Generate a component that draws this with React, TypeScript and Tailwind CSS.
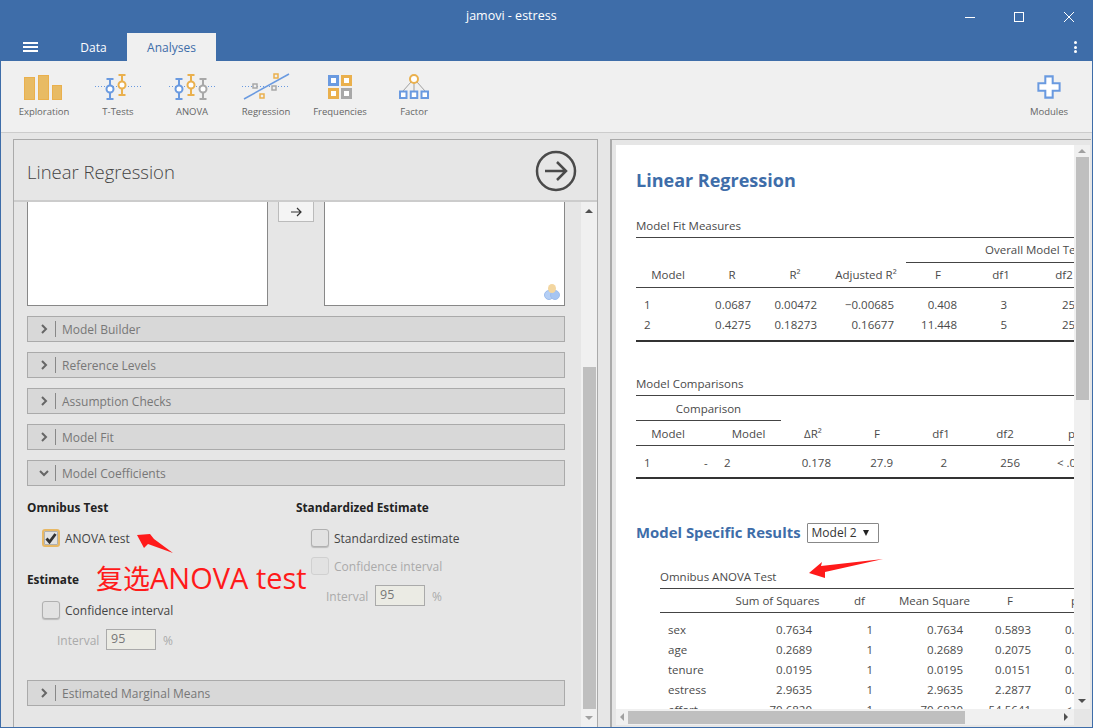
import React from "react";

const FONT = "font-['Open_Sans','Noto_Sans',sans-serif]";

function Exploration() {
  return (
    <svg width="40" height="28" viewBox="0 0 40 28" className="block">
      <rect x="0.5" y="5.5" width="10" height="22" fill="#e8bb64" stroke="#eab04d" />
      <rect x="14.5" y="3.5" width="10" height="24" fill="#e8bb64" stroke="#eab04d" />
      <rect x="28.5" y="13.5" width="9" height="14" fill="#e8bb64" stroke="#eab04d" />
    </svg>
  );
}

function Whisker({ x, top, bottom, cy, color }: { x: number; top: number; bottom: number; cy: number; color: string }) {
  return (
    <g stroke={color} strokeWidth="2" fill="none">
      <path d={`M${x - 3.5} ${top}H${x + 3.5}M${x - 3.5} ${bottom}H${x + 3.5}M${x} ${top}V${cy - 3.5}M${x} ${cy + 3.5}V${bottom}`} />
      <circle cx={x} cy={cy} r="3.5" fill="#fff" />
    </g>
  );
}

function TTests() {
  return (
    <svg width="48" height="28" viewBox="0 0 48 28" className="block">
      <path d="M1 14.5H47" stroke="#6a9ae0" strokeWidth="1" strokeDasharray="1 2" />
      <Whisker x={16} top={7} bottom={27} cy={17} color="#6a9ae0" />
      <Whisker x={28} top={3} bottom={23} cy={13} color="#eab04d" />
    </svg>
  );
}

function Anova() {
  return (
    <svg width="48" height="28" viewBox="0 0 48 28" className="block">
      <path d="M1 14.5H47" stroke="#6a9ae0" strokeWidth="1" strokeDasharray="1 2" />
      <Whisker x={11} top={7} bottom={27} cy={17} color="#6a9ae0" />
      <Whisker x={23} top={3} bottom={23} cy={13} color="#eab04d" />
      <Whisker x={35} top={7} bottom={27} cy={17} color="#a8a8a8" />
    </svg>
  );
}

function Regression() {
  return (
    <svg width="50" height="28" viewBox="0 0 50 28" className="block">
      <path d="M1 14.5H49" stroke="#6a9ae0" strokeWidth="1" strokeDasharray="1 2" />
      <path d="M3 27L48 2" stroke="#6a9ae0" strokeWidth="1.5" />
      <rect x="12" y="12" width="4" height="4" fill="#f0f0f0" stroke="#a8a8a8" strokeWidth="1.5" />
      <rect x="31" y="14" width="4" height="4" fill="#f0f0f0" stroke="#a8a8a8" strokeWidth="1.5" />
      <rect x="33" y="2" width="4" height="4" fill="#f0f0f0" stroke="#eab04d" strokeWidth="1.5" />
      <rect x="19" y="22" width="4" height="4" fill="#f0f0f0" stroke="#eab04d" strokeWidth="1.5" />
    </svg>
  );
}

function Frequencies() {
  const box = (x: number, y: number, c: string) => (
    <g key={`${x}-${y}`}>
      <rect x={x} y={y} width="11" height="11" fill={c} />
      <rect x={x + 3} y={y + 3} width="5" height="5" fill="#fff" />
    </g>
  );
  return (
    <svg width="24" height="24" viewBox="0 0 24 24" className="block mb-px">
      {box(0, 0, "#6a9ae0")}
      {box(13, 0, "#eab04d")}
      {box(0, 13, "#eab04d")}
      {box(13, 13, "#a8a8a8")}
    </svg>
  );
}

function Factor() {
  return (
    <svg width="32" height="28" viewBox="0 0 32 28" className="block">
      <path d="M13 10L5 19M16 11V19M19 10L27 19" stroke="#a0a0a0" strokeWidth="1" />
      <circle cx="16" cy="7" r="4" fill="#fff" stroke="#eab04d" strokeWidth="2" />
      <rect x="2" y="19.5" width="6.5" height="6.5" fill="#fff" stroke="#6a9ae0" strokeWidth="2" />
      <rect x="12.75" y="19.5" width="6.5" height="6.5" fill="#fff" stroke="#6a9ae0" strokeWidth="2" />
      <rect x="23.5" y="19.5" width="6.5" height="6.5" fill="#fff" stroke="#6a9ae0" strokeWidth="2" />
    </svg>
  );
}

function Plus() {
  return (
    <svg width="24" height="24" viewBox="0 0 26 26" className="block mb-px">
      <path d="M9 1.5H17V9H24.5V17H17V24.5H9V17H1.5V9H9Z" fill="#fff" stroke="#6a9ae0" strokeWidth="2.2" />
    </svg>
  );
}

function RibbonItem({ label, children, className }: { label: string; children: React.ReactNode; className: string }) {
  return (
    <div className={`flex flex-col items-center ${className}`}>
      <div className="h-[31px] mt-[8px] flex items-end justify-center">{children}</div>
      <div className="mt-[5px] text-[9.5px] leading-[14px] text-[#666] whitespace-nowrap">{label}</div>
    </div>
  );
}

function Bar({ label, open }: { label: string; open?: boolean }) {
  return (
    <div className="h-[26px] w-[538px] shrink-0 border border-[#aaa] bg-[#d8d8d8] flex items-center">
      <div className="w-[28px] h-[16px] border-r border-[#888] flex items-center justify-center text-[#666]">
        <svg width="12" height="12" viewBox="0 0 12 12" className="block ml-[5px]">
          <path d={open ? "M2 4L6 8L10 4" : "M4 2L8 6L4 10"} fill="none" stroke="#666" strokeWidth="2" />
        </svg>
      </div>
      <span className="ml-[6px] mt-[2px] text-[12px] text-[#777]">{label}</span>
    </div>
  );
}

function Check({ checked, faded, label }: { checked?: boolean; faded?: boolean; label: string }) {
  return (
    <div className="flex items-center h-[18px]">
      <div
        className={`w-[18px] h-[18px] rounded-[3px] flex items-center justify-center bg-[#e2e2e2] ${
          checked
            ? "border-2 border-[#e8b864] shadow-[inset_0_0_0_1px_#b0b0b0]"
            : faded
              ? "border border-[#d0d0d0]"
              : "border border-[#b0b0b0] shadow-[0_1px_1px_#bbb]"
        }`}
      >
        {checked && (
          <svg width="12" height="12" viewBox="0 0 12 12" className="block">
            <path d="M1.5 6.5L4.5 10L10.5 2" fill="none" stroke="#333" strokeWidth="2.8" />
          </svg>
        )}
      </div>
      <span className={`ml-[5px] mt-px text-[12px] ${faded ? "text-[#aaa]" : "text-[#444]"}`}>{label}</span>
    </div>
  );
}

function IntervalRow({ className }: { className: string }) {
  return (
    <div className={`flex items-center h-[21px] text-[12px] text-[#aaa] ${className}`}>
      <span className="w-[49px] mt-[2px]">Interval</span>
      <div className="w-[50px] h-[21px] border border-[#aaa] bg-[#ebebe4] text-[#777] pl-[4px] text-[12.5px] leading-[17px]">95</div>
      <span className="ml-[7px] mt-[2px]">%</span>
    </div>
  );
}

function Cell({ className, children }: { className: string; children?: React.ReactNode }) {
  return <div className={`shrink-0 whitespace-nowrap ${className}`}>{children}</div>;
}

const Rule = ({ thick }: { thick?: boolean }) => (
  <div className={`w-[1000px] ${thick ? "h-[2px] bg-[#333]" : "h-px bg-[#444]"}`} />
);

const T1H = ["w-[64px] text-center", "w-[64px] text-center", "w-[62px] text-center", "w-[80px] text-center", "w-[64px] text-center", "w-[62px] text-center", "w-[64px] text-center"];
const T1B = ["w-[64px] pl-[8px]", "w-[64px] text-right pr-[13px]", "w-[62px] text-right pr-[9px]", "w-[80px] text-right pr-[12px]", "w-[64px] text-right pr-[13px]", "w-[62px] text-right pr-[25px]", "w-[64px] pl-[30px]"];
const T1R = [
  ["1", "0.0687", "0.00472", "−0.00685", "0.408", "3", "258"],
  ["2", "0.4275", "0.18273", "0.16677", "11.448", "5", "256"],
];

const T3H = ["w-[70px]", "w-[95px] text-center", "w-[69px] text-center", "w-[81px] text-center", "w-[70px] text-center", "w-[95px] pl-[26px]"];
const T3B = ["w-[70px] pl-[8px]", "w-[95px] text-right pr-[13px]", "w-[69px] text-right pr-[21px]", "w-[81px] text-right pr-[12px]", "w-[70px] text-right pr-[14px]", "w-[95px] pl-[20px]"];
const T3R = [
  ["sex", "0.7634", "1", "0.7634", "0.5893", "0.443"],
  ["age", "0.2689", "1", "0.2689", "0.2075", "0.649"],
  ["tenure", "0.0195", "1", "0.0195", "0.0151", "0.902"],
  ["estress", "2.9635", "1", "2.9635", "2.2877", "0.132"],
  ["effort", "70.6820", "1", "70.6820", "54.5641", "< .001"],
];

export default function App() {
  return (
    <div className={`relative w-[1093px] h-[728px] overflow-hidden bg-[#3e6da9] flex flex-col ${FONT}`}>
      {/* title bar */}
      <div className="h-[33px] shrink-0 flex items-center text-white">
        <span className="ml-[466px] text-[12.5px]">jamovi - estress</span>
        <div className="ml-auto mr-[19px] flex items-center gap-[39px]">
          <svg width="10" height="10" viewBox="0 0 10 10" className="block"><path d="M0 5.5H10" stroke="#fff" /></svg>
          <svg width="10" height="10" viewBox="0 0 10 10" className="block"><rect x="0.5" y="0.5" width="9" height="9" fill="none" stroke="#fff" /></svg>
          <svg width="10" height="10" viewBox="0 0 10 10" className="block ml-px"><path d="M0 0L10 10M10 0L0 10" stroke="#fff" /></svg>
        </div>
      </div>
      {/* tabs */}
      <div className="h-[28px] shrink-0 flex items-end text-[12px]">
        <div className="w-[60px] h-full flex flex-col items-center justify-center gap-[2px] pl-[1px]">
          <div className="w-[15px] h-[2px] bg-white" />
          <div className="w-[15px] h-[2px] bg-white" />
          <div className="w-[15px] h-[2px] bg-white" />
        </div>
        <div className="w-[67px] h-full flex items-center justify-center text-white pt-[2px]">Data</div>
        <div className="w-[89px] h-full bg-[#f0f0f0] text-[#3e6da9] flex items-center justify-center pt-[2px]">Analyses</div>
        <div className="ml-auto mr-[16px] h-full flex flex-col items-center justify-center gap-[1.5px]">
          <div className="w-[3px] h-[3px] rounded-full bg-white" />
          <div className="w-[3px] h-[3px] rounded-full bg-white" />
          <div className="w-[3px] h-[3px] rounded-full bg-white" />
        </div>
      </div>
      {/* ribbon */}
      <div className="mx-px h-[72px] shrink-0 bg-[#f0f0f0] border-b border-[#ccc] flex pl-[6px]">
        <RibbonItem label="Exploration" className="w-[74px]"><Exploration /></RibbonItem>
        <RibbonItem label="T-Tests" className="w-[74px]"><TTests /></RibbonItem>
        <RibbonItem label="ANOVA" className="w-[74px]"><Anova /></RibbonItem>
        <RibbonItem label="Regression" className="w-[74px]"><Regression /></RibbonItem>
        <RibbonItem label="Frequencies" className="w-[74px]"><Frequencies /></RibbonItem>
        <RibbonItem label="Factor" className="w-[74px]"><Factor /></RibbonItem>
        <RibbonItem label="Modules" className="w-[74px] ml-auto mr-[6px]"><Plus /></RibbonItem>
      </div>
      {/* main */}
      <div className="mx-px mb-px flex-1 min-h-0 bg-[#e6e6e6] flex pl-[12px]">
        {/* left panel */}
        <div className="w-[585px] mt-[6px] border border-b-0 border-[#aaa] flex flex-col min-h-0">
          <div className="h-[62px] shrink-0 border-b-2 border-[#ccc] flex items-center justify-between pl-[13px] pr-[20px]">
            <span className="text-[18.5px] font-light text-[#444] mt-[4px]">Linear Regression</span>
            <svg width="42" height="42" viewBox="0 0 42 42" className="block mt-[2px]">
              <circle cx="21" cy="21" r="19" fill="none" stroke="#4a4a4a" strokeWidth="2.5" />
              <path d="M10 21H31M22 12L31 21L22 30" fill="none" stroke="#4a4a4a" strokeWidth="2.5" />
            </svg>
          </div>
          <div className="flex-1 min-h-0 flex">
            <div className="w-[567px] pl-[13px] flex flex-col">
              <div className="flex shrink-0">
                <div className="w-[241px] h-[104px] bg-white border border-t-0 border-[#888]" />
                <div className="ml-[10px] w-[36px] h-[20px] bg-[#f4f4f4] border border-t-0 border-[#bbb] flex items-center justify-center">
                  <svg width="12" height="12" viewBox="0 0 12 12" className="block">
                    <path d="M1 6H11M7 2L11 6L7 10" fill="none" stroke="#333" strokeWidth="1.2" />
                  </svg>
                </div>
                <div className="ml-[10px] w-[241px] h-[104px] bg-white border border-t-0 border-[#888] flex items-end justify-end pr-[4px] pb-[4px]">
                  <svg width="16" height="18" viewBox="0 0 16 18" className="block">
                    <circle cx="5" cy="12" r="4.5" fill="#b5cff5" stroke="#9dbdec" />
                    <circle cx="11" cy="12" r="4.5" fill="#a6c5f2" stroke="#9dbdec" />
                    <ellipse cx="8" cy="5.5" rx="4" ry="4.5" fill="#f3d6a0" />
                  </svg>
                </div>
              </div>
              <div className="mt-[10px] flex flex-col gap-[10px] shrink-0">
                <Bar label="Model Builder" />
                <Bar label="Reference Levels" />
                <Bar label="Assumption Checks" />
                <Bar label="Model Fit" />
                <Bar label="Model Coefficients" open />
              </div>
              <div className="h-[194px] shrink-0 flex">
                <div className="w-[269px] flex flex-col">
                  <div className="mt-[12px] h-[18px] leading-[18px] text-[11.8px] font-bold text-[#222]">Omnibus Test</div>
                  <div className="mt-[13px] ml-[15px]"><Check checked label="ANOVA test" /></div>
                  <div className="mt-[23px] h-[18px] leading-[18px] text-[11.8px] font-bold text-[#222]">Estimate</div>
                  <div className="mt-[13px] ml-[15px]"><Check label="Confidence interval" /></div>
                  <IntervalRow className="mt-[10px] ml-[30px]" />
                </div>
                <div className="flex flex-col">
                  <div className="mt-[12px] h-[18px] leading-[18px] text-[11.8px] font-bold text-[#222]">Standardized Estimate</div>
                  <div className="mt-[13px] ml-[15px]"><Check label="Standardized estimate" /></div>
                  <div className="mt-[10px] ml-[15px]"><Check faded label="Confidence interval" /></div>
                  <IntervalRow className="mt-[10px] ml-[30px]" />
                </div>
              </div>
              <Bar label="Estimated Marginal Means" />
            </div>
            {/* left scrollbar */}
            <div className="w-[16px] bg-[#f0f0f0] flex flex-col items-center">
              <div className="h-[17px] flex items-center justify-center">
                <div className="w-0 h-0 border-x-[4px] border-x-transparent border-b-[4px] border-b-[#505050]" />
              </div>
              <div className="h-[148px]" />
              <div className="w-[13px] h-[342px] bg-[#bfbfbf]" />
              <div className="flex-1 flex items-center justify-center">
                <div className="w-0 h-0 border-x-[4px] border-x-transparent border-t-[4px] border-t-[#a0a0a0]" />
              </div>
            </div>
          </div>
        </div>
        {/* right panel */}
        <div className="ml-[12px] w-[481px] mt-[6px] border-l-2 border-t border-[#aaa] flex flex-col min-h-0">
          <div className="flex-1 min-h-0 flex pl-[4px] pt-[5px]">
            <div className="w-[458px] bg-white overflow-hidden pl-[20px] pt-[23px] text-[11.5px] text-[#4a4a4a]">
              <div className="h-[24px] leading-[24px] text-[18px] font-bold text-[#3e6da9]">Linear Regression</div>

              <div className="mt-[26px] h-[19px] leading-[16px]">Model Fit Measures</div>
              <Rule />
              <div className="flex h-[25px] w-[1000px]">
                <div className="w-[270px] shrink-0" />
                <div className="w-[700px] shrink-0 border-b border-[#444] pl-[79px] leading-[24px] whitespace-nowrap">Overall Model Test</div>
              </div>
              <div className="flex h-[24px] items-center">
                {["Model", "R", "R²", "Adjusted R²", "F", "df1", "df2"].map((h, i) => (
                  <Cell key={h} className={T1H[i]}>{h}</Cell>
                ))}
              </div>
              <Rule />
              <div className="pt-[7px] pb-[5px]">
                {T1R.map((r) => (
                  <div key={r[0]} className="flex h-[20px] items-center">
                    {r.map((c, i) => (
                      <Cell key={i} className={T1B[i]}>{c}</Cell>
                    ))}
                  </div>
                ))}
              </div>
              <Rule thick />

              <div className="mt-[33px] h-[20px] leading-[18px]">Model Comparisons</div>
              <Rule />
              <div className="w-[145px] h-[25px] border-b border-[#444] text-center leading-[26px]">Comparison</div>
              <div className="flex h-[24px] items-center pt-[2px]">
                <Cell className="w-[64px] text-center">Model</Cell>
                <Cell className="w-[16px]" />
                <Cell className="w-[65px] text-center">Model</Cell>
                <Cell className="w-[64px] text-center">ΔR²</Cell>
                <Cell className="w-[64px] text-center">F</Cell>
                <Cell className="w-[64px] text-center">df1</Cell>
                <Cell className="w-[64px] text-center">df2</Cell>
                <Cell className="w-[64px] pl-[31px]">p</Cell>
              </div>
              <Rule />
              <div className="pt-[7px] pb-[4px]">
                <div className="flex h-[20px] items-center">
                  <Cell className="w-[64px] pl-[8px]">1</Cell>
                  <Cell className="w-[16px] pl-[4px]">-</Cell>
                  <Cell className="w-[65px] pl-[8px]">2</Cell>
                  <Cell className="w-[64px] text-right pr-[14px]">0.178</Cell>
                  <Cell className="w-[64px] text-right pr-[16px]">27.9</Cell>
                  <Cell className="w-[64px] text-right pr-[26px]">2</Cell>
                  <Cell className="w-[64px] text-right pr-[17px]">256</Cell>
                  <Cell className="w-[64px] pl-[20px]">{"< .001"}</Cell>
                </div>
              </div>
              <Rule thick />

              <div className="mt-[42px] h-[24px] flex items-center">
                <span className="text-[14.9px] font-bold text-[#3e6da9] mb-[2px]">Model Specific Results</span>
                <div className="ml-[6px] w-[72px] h-[20px] border border-[#888] rounded-[1px] bg-white flex items-center pl-[4px] text-[12px] text-[#333]">
                  Model 2
                  <span className="ml-[6px] w-0 h-0 border-x-[3.5px] border-x-transparent border-t-[6px] border-t-[#222]" />
                </div>
              </div>

              <div className="ml-[24px] mt-[23px] h-[20px] leading-[18px]">Omnibus ANOVA Test</div>
              <div className="ml-[24px]"><Rule /></div>
              <div className="ml-[24px] flex h-[23px] items-center">
                {["", "Sum of Squares", "df", "Mean Square", "F", "p"].map((h, i) => (
                  <Cell key={i} className={T3H[i]}>{h}</Cell>
                ))}
              </div>
              <div className="ml-[24px]"><Rule /></div>
              <div className="ml-[24px] pt-[7px]">
                {T3R.map((r) => (
                  <div key={r[0]} className="flex h-[20px] items-center">
                    {r.map((c, i) => (
                      <Cell key={i} className={T3B[i]}>{c}</Cell>
                    ))}
                  </div>
                ))}
              </div>
            </div>
            {/* right vertical scrollbar */}
            <div className="w-[16px] bg-[#f0f0f0] flex flex-col items-center">
              <div className="h-[12px] flex items-center justify-center">
                <div className="w-0 h-0 border-x-[4px] border-x-transparent border-b-[4px] border-b-[#a0a0a0]" />
              </div>
              <div className="w-[13px] h-[243px] bg-[#bfbfbf]" />
              <div className="flex-1 flex items-end justify-center pb-[6px]">
                <div className="w-0 h-0 border-x-[4px] border-x-transparent border-t-[4px] border-t-[#505050]" />
              </div>
            </div>
          </div>
          {/* right horizontal scrollbar */}
          <div className="h-[18px] shrink-0 flex pl-[4px] pb-[2px]">
            <div className="w-[458px] bg-[#f0f0f0] flex items-center">
              <div className="w-[12px] flex justify-center">
                <div className="w-0 h-0 border-y-[4px] border-y-transparent border-r-[4px] border-r-[#a0a0a0]" />
              </div>
              <div className="w-[337px] h-[13px] bg-[#bfbfbf]" />
              <div className="ml-auto w-[16px] flex justify-center">
                <div className="w-0 h-0 border-y-[4px] border-y-transparent border-l-[4px] border-l-[#505050]" />
              </div>
            </div>
          </div>
        </div>
      </div>
      {/* annotations drawn over the screenshot */}
      <div className="absolute left-[96px] top-[559px] text-[27px] leading-[38px] text-[#ff1a1a] whitespace-nowrap font-['Noto_Sans_CJK_SC',sans-serif]">
        复选<span className="text-[29px] font-['Open_Sans','Noto_Sans_CJK_SC',sans-serif]">ANOVA test</span>
      </div>
      <svg className="absolute left-0 top-0 pointer-events-none" width="1093" height="728" viewBox="0 0 1093 728">
        <polygon points="137,535 150,534 154,539 173,553 148,544 144,548" fill="#ff1a1a" />
        <polygon points="809,573 822,562 821,566 883,559 825,572 825,578" fill="#ff1a1a" />
      </svg>
    </div>
  );
}
